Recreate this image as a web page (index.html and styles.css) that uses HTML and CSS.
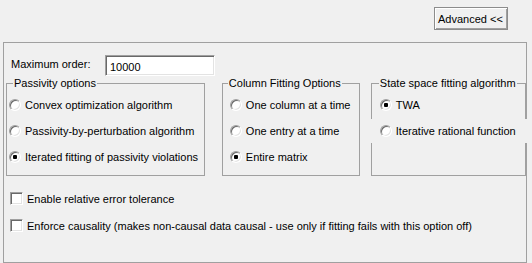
FILE: index.html
```html
<!DOCTYPE html>
<html lang="en">
<head>
  <meta charset="UTF-8">
  <title>Fitting options</title>
  <link rel="stylesheet" href="styles.css">
</head>
<body>
  <div class="top">
    <button class="adv">Advanced &lt;&lt;</button>
  </div>
  <div class="panel">
    <div class="order-row">
      <label class="order-label" for="maxOrder">Maximum order:</label>
      <input class="edit" id="maxOrder" type="text" value="10000">
    </div>
    <div class="groups">
      <fieldset class="group passivity">
        <legend>Passivity options</legend>
        <div class="opts">
          <label class="row"><input type="radio" name="pass"> Convex optimization algorithm</label>
          <label class="row"><input type="radio" name="pass"> Passivity-by-perturbation algorithm</label>
          <label class="row"><input type="radio" name="pass" checked> Iterated fitting of passivity violations</label>
        </div>
      </fieldset>
      <fieldset class="group column">
        <legend>Column Fitting Options</legend>
        <div class="opts">
          <label class="row"><input type="radio" name="col"> One column at a time</label>
          <label class="row"><input type="radio" name="col"> One entry at a time</label>
          <label class="row"><input type="radio" name="col" checked> Entire matrix</label>
        </div>
      </fieldset>
      <fieldset class="group state">
        <legend>State space fitting algorithm</legend>
        <div class="opts short">
          <label class="row"><input type="radio" name="ss" checked> TWA</label>
          <label class="row wide"><input type="radio" name="ss"> Iterative rational function</label>
        </div>
      </fieldset>
    </div>
    <div class="checks">
      <label class="check"><input type="checkbox"> Enable relative error tolerance</label>
      <label class="check"><input type="checkbox"> Enforce causality (makes non-causal data causal - use only if fitting fails with this option off)</label>
    </div>
  </div>
</body>
</html>
```

FILE: styles.css
```css
body{
  margin: 0;
  background-color: #f0f0f0;
  font-family: Tahoma, "Liberation Sans", Arial, sans-serif;
  font-size: 11px;
  color: #000;
}
.top{
  display: flex;
  justify-content: flex-end;
  padding: 7px 24px 0 0;
}
.adv{
  width: 74px;
  height: 23px;
  margin: 0;
  padding: 0 0 0 3px;
  text-align: left;
  font: inherit;
  color: #000;
  background-color: #f0f0f0;
  border: 1px solid #8c8c8c;
  box-shadow: inset 1px 1px 0 #fff, inset -1px -1px 0 #a0a0a0;
}
.panel{
  margin: 12px 0 0 3px;
  width: 524px;
  height: 221px;
  box-sizing: border-box;
  border: 1px solid #a0a0a0;
  padding: 12px 0 0 2px;
}
.order-row{
  display: flex;
  align-items: center;
  margin-left: 5px;
}
.order-label{
  width: 94px;
  margin-top: -3px;
}
.edit{
  width: 110px;
  height: 21px;
  box-sizing: border-box;
  margin: 0;
  padding: 2px 0 0 4px;
  font: inherit;
  color: #000;
  background: #fff;
  border: 1px solid;
  border-color: #a0a0a0 #fff #fff #a0a0a0;
  box-shadow: inset 1px 1px 0 #696969, inset -1px -1px 0 #e3e3e3;
  outline: none;
}
.groups{
  display: flex;
  margin-top: 1px;
}
.group{
  margin: 0;
  padding: 0;
  min-width: 0;
  border: 1px solid #a0a0a0;
}
.group legend{
  padding: 0 1px;
  line-height: 13px;
}
.passivity{
  width: 204px;
  padding-left: 2px;
}
.passivity legend{ margin-left: 4px; }
.column{
  width: 135px;
  margin-left: 17px;
  padding-left: 7px;
}
.column legend{ margin-left: -2px; }
.state{
  width: 152px;
  margin-left: 11px;
  padding-left: 8px;
}
.state legend{ margin-left: -1px; }
.opts{
  height: 83px;
  padding-top: 2px;
}
.opts.short{
  height: 82px;
}
.row{
  display: flex;
  align-items: center;
  height: 26px;
  white-space: nowrap;
}
.row.wide{
  height: 24px;
  margin: 1px -3px 0 -9px;
  padding-left: 9px;
  overflow: hidden;
  background-color: #f0f0f0;
}
.row input{
  appearance: none;
  width: 12px;
  height: 12px;
  margin: 0 4px 0 0;
  border-radius: 50%;
  border: 1px solid;
  border-color: #a0a0a0 #fff #fff #a0a0a0;
  box-shadow: inset 1px 1px 0 #696969, inset -1px -1px 0 #e3e3e3;
  background-color: #fff;
  flex: none;
}
.row input:checked{
  background: radial-gradient(circle, #000 0, #000 2px, #fff 2.5px);
}
.checks{
  margin: 16px 0 0 4px;
}
.check{
  display: flex;
  align-items: center;
  height: 13px;
  margin-bottom: 14px;
  white-space: nowrap;
}
.check input{
  appearance: none;
  width: 13px;
  height: 13px;
  margin: 0 4px 0 0;
  border: 1px solid;
  border-color: #a0a0a0 #fff #fff #a0a0a0;
  box-shadow: inset 1px 1px 0 #696969, inset -1px -1px 0 #e3e3e3;
  background-color: #fff;
  flex: none;
}
```
